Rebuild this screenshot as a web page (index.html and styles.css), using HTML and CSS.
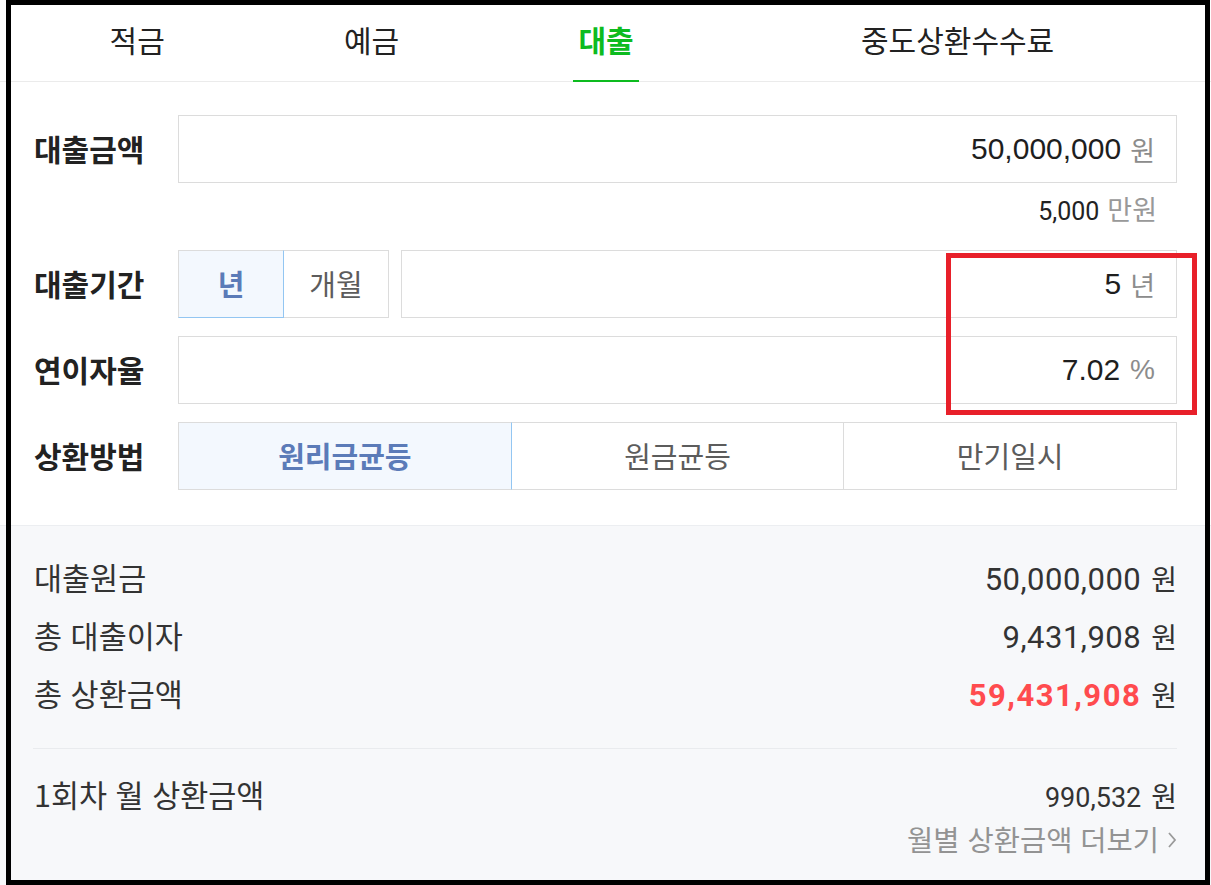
FILE: index.html
```html
<!DOCTYPE html>
<html lang="ko">
<head>
<meta charset="utf-8">
<title>대출 계산기</title>
<link rel="stylesheet" href="styles.css">
</head>
<body>
<div class="page">
  <nav class="tabs">
    <div class="tab"><span class="tab-label">적금</span></div>
    <div class="tab"><span class="tab-label">예금</span></div>
    <div class="tab active"><span class="tab-label">대출</span></div>
    <div class="tab"><span class="tab-label">중도상환수수료</span></div>
  </nav>

  <section class="form">
    <div class="row">
      <div class="label">대출금액</div>
      <div class="field"><span class="val">50,000,000</span><span class="unit">원</span></div>
    </div>
    <div class="hint"><span class="hint-num">5,000</span><span class="hint-unit">만원</span></div>

    <div class="row">
      <div class="label">대출기간</div>
      <div class="seg seg-period">
        <div class="seg-item selected sel-bottom">년</div>
        <div class="seg-item">개월</div>
      </div>
      <div class="field field-period"><span class="val">5</span><span class="unit">년</span></div>
    </div>

    <div class="row row-gap">
      <div class="label">연이자율</div>
      <div class="field"><span class="val">7.02</span><span class="unit unit-pct">%</span></div>
    </div>

    <div class="row row-gap">
      <div class="label">상환방법</div>
      <div class="seg seg-method">
        <div class="seg-item selected">원리금균등</div>
        <div class="seg-item">원금균등</div>
        <div class="seg-item">만기일시</div>
      </div>
    </div>
  </section>

  <section class="summary">
    <div class="sum-row"><span class="sum-label">대출원금</span><span class="sum-value"><span class="num">50,000,000</span><span class="won">원</span></span></div>
    <div class="sum-row"><span class="sum-label">총 대출이자</span><span class="sum-value"><span class="num">9,431,908</span><span class="won">원</span></span></div>
    <div class="sum-row"><span class="sum-label">총 상환금액</span><span class="sum-value"><span class="num num-red">59,431,908</span><span class="won">원</span></span></div>
    <div class="divider"></div>
    <div class="sum-row monthly"><span class="sum-label">1회차 월 상환금액</span><span class="sum-value"><span class="num num-small">990,532</span><span class="won">원</span></span></div>
    <div class="more"><span class="more-text">월별 상환금액 더보기</span><svg class="chev" width="10" height="18" viewBox="0 0 10 18"><path d="M2 2 L8 9 L2 16" fill="none" stroke="#9a9a9a" stroke-width="1.8"/></svg></div>
  </section>
</div>
<div class="frame"></div>
<div class="annot"></div>
</body>
</html>
```

FILE: styles.css
```css
html, body {
  margin: 0;
  padding: 0;
  overflow: hidden;
  background: #ffffff;
}
body {
  font-family: "Noto Sans CJK KR", "Noto Sans", sans-serif;
  color: #222222;
  width: 1211px;
  height: 885px;
  position: relative;
}
.page {
  width: 1211px;
  height: 885px;
  display: flex;
  flex-direction: column;
}

/* tabs */
.tabs {
  height: 81px;
  border-bottom: 1px solid #ebebeb;
  display: grid;
  grid-template-columns: 1fr 1fr 1fr 2fr;
  padding: 0 19px 0 20px;
  flex: none;
}
.tab {
  display: flex;
  justify-content: center;
}
.tab-label {
  position: relative;
  display: flex;
  align-items: center;
  padding: 0 5px 4px;
  font-size: 30px;
  color: #222222;
}
.tab.active .tab-label {
  color: #0dbb1f;
  font-weight: 700;
}
.tab.active .tab-label::after {
  content: "";
  position: absolute;
  left: 0;
  right: 0;
  bottom: -1px;
  height: 2px;
  background: #0dbb1f;
}

/* form */
.form {
  padding: 33px 34px 35px 33px;
  flex: none;
}
.row {
  display: flex;
  align-items: center;
  height: 68px;
}
.row-gap {
  margin-top: 18px;
}
.label {
  width: 145px;
  flex: none;
  font-size: 30px;
  font-weight: 700;
  color: #222222;
  padding-left: 1px;
  padding-bottom: 2px;
  box-sizing: border-box;
}
.field {
  flex: 1;
  height: 68px;
  box-sizing: border-box;
  border: 1px solid #dcdcdc;
  display: flex;
  align-items: center;
  justify-content: flex-end;
  padding-right: 21px;
}
.field-period {
  margin-left: 12px;
}
.val {
  font-family: "Liberation Sans", Arial, sans-serif;
  font-size: 30px;
  color: #1e1e1e;
}
.unit {
  font-size: 27px;
  color: #8c8c8c;
  margin-left: 9px;
}
.unit-pct {
  font-family: "Liberation Sans", Arial, sans-serif;
  font-size: 28px;
  margin-left: 10px;
}
.hint {
  height: 67px;
  box-sizing: border-box;
  padding: 11px 20px 0 0;
  display: flex;
  justify-content: flex-end;
  align-items: baseline;
  line-height: 30px;
}
.hint-num {
  font-family: Roboto, sans-serif;
  font-size: 25px;
  color: #222222;
}
.hint-unit {
  font-size: 27px;
  color: #999999;
  margin-left: 8px;
}

/* segmented controls */
.seg {
  display: flex;
  height: 68px;
  flex: none;
}
.seg-period {
  width: 211px;
}
.seg-method {
  flex: 1;
}
.seg-item {
  flex: 1;
  box-sizing: border-box;
  border: 1px solid #dcdcdc;
  margin-left: -1px;
  display: flex;
  align-items: center;
  justify-content: center;
  font-size: 29px;
  color: #5c5c5c;
  padding-bottom: 2px;
}
.seg-item:first-child {
  margin-left: 0;
}
.seg-item.selected {
  background: #f3f8fe;
  color: #5b7bb8;
  font-weight: 700;
  border-right-color: #93c6f2;
  position: relative;
  z-index: 1;
}
.seg-item.sel-bottom {
  border-bottom-color: #93c6f2;
}

/* summary */
.summary {
  flex: 1;
  background: #f7f8fa;
  border-top: 1px solid #eceef1;
  padding: 22px 34px 0 33px;
}
.sum-row {
  display: flex;
  justify-content: space-between;
  align-items: baseline;
  height: 58px;
  line-height: 58px;
}
.sum-label {
  font-size: 30.5px;
  color: #333333;
  padding-left: 1px;
}
.sum-value {
  display: flex;
  align-items: baseline;
  white-space: nowrap;
}
.num {
  font-family: Roboto, sans-serif;
  font-size: 31px;
  letter-spacing: 0.5px;
  color: #333333;
}
.num-red {
  color: #ff4b4e;
  font-weight: 700;
  letter-spacing: 1.5px;
}
.num-small {
  font-size: 27px;
  letter-spacing: 0;
}
.won {
  font-size: 28px;
  color: #333333;
  margin-left: 10px;
}
.divider {
  height: 1px;
  background: #e9ebee;
  margin: 26px 0 20px;
}
.sum-row.monthly {
  height: 50px;
  line-height: 50px;
}
.more {
  display: flex;
  justify-content: flex-end;
  align-items: center;
  height: 36px;
  line-height: 36px;
  margin-top: 2px;
}
.more-text {
  font-size: 28.5px;
  color: #939393;
}
.chev {
  margin-left: 8px;
  margin-top: 2px;
}

/* screenshot annotations */
.frame {
  position: absolute;
  left: 6px;
  top: 0;
  width: 1204px;
  height: 885px;
  box-sizing: border-box;
  border: 5px solid #000000;
  pointer-events: none;
}
.annot {
  position: absolute;
  left: 946px;
  top: 253px;
  width: 251px;
  height: 162px;
  box-sizing: border-box;
  border: 5px solid #e8202a;
  pointer-events: none;
}
```
